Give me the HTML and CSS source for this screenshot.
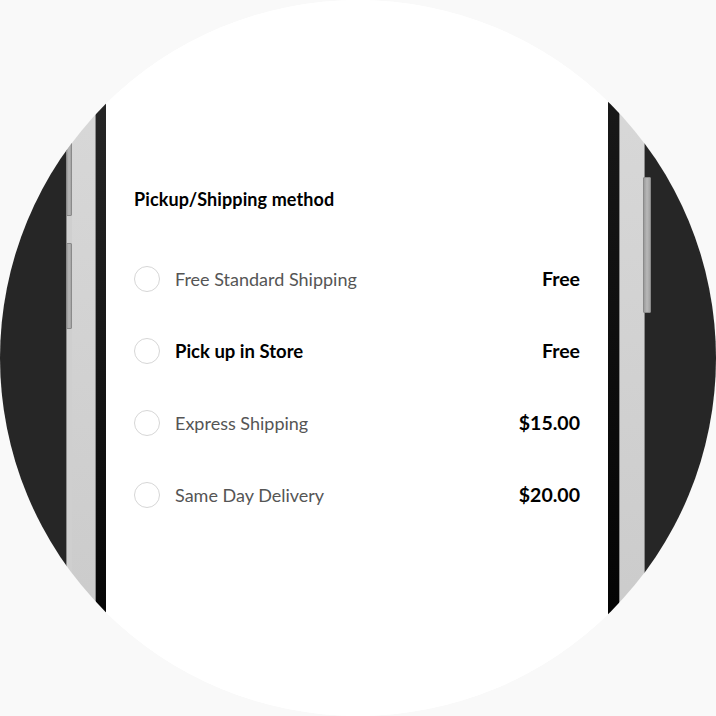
FILE: index.html
```html
<!DOCTYPE html>
<html>
<head>
<meta charset="utf-8">
<link rel="stylesheet" href="styles.css">
</head>
<body>
<div class="lens">
  <div class="body-dark"></div>
  <div class="side side-left">
    <div class="track">
      <div class="btn btn-a"></div>
      <div class="btn btn-b"></div>
    </div>
    <div class="metal"></div>
  </div>
  <div class="bezel bezel-left"></div>
  <div class="screen">
    <h2 class="title">Pickup/Shipping method</h2>
    <div class="options">
      <div class="option">
        <span class="radio"></span>
        <span class="label">Free Standard Shipping</span>
        <span class="price">Free</span>
      </div>
      <div class="option">
        <span class="radio"></span>
        <span class="label strong">Pick up in Store</span>
        <span class="price">Free</span>
      </div>
      <div class="option">
        <span class="radio"></span>
        <span class="label">Express Shipping</span>
        <span class="price">$15.00</span>
      </div>
      <div class="option">
        <span class="radio"></span>
        <span class="label">Same Day Delivery</span>
        <span class="price">$20.00</span>
      </div>
    </div>
  </div>
  <div class="bezel bezel-right"></div>
  <div class="side side-right">
    <div class="metal"></div>
    <div class="btn btn-c"></div>
  </div>
  <div class="body-dark body-dark-right"></div>
</div>
</body>
</html>
```
FILE: styles.css
```css
html, body {
  margin: 0;
  padding: 0;
  background: #f9f9f9;
}
body {
  width: 716px;
  height: 716px;
  font-family: "Lato", "Open Sans", sans-serif;
}
.lens {
  width: 716px;
  height: 716px;
  border-radius: 50%;
  overflow: hidden;
  background: #ffffff;
  display: flex;
}
.body-dark {
  width: 66px;
  flex: none;
  background: #262626;
}
.body-dark-right {
  width: 71px;
}
.side {
  flex: none;
  display: flex;
  position: relative;
}
.side-left {
  width: 30px;
}
.side-left .track {
  width: 6px;
  background: #cfcfcf;
  border-left: 1px solid #8c8c8c;
  box-sizing: border-box;
  display: flex;
  flex-direction: column;
}
.metal {
  flex: 1;
  background: linear-gradient(#dadada, #c9c9c9);
}
.side-left .metal {
  border-right: 1px solid #8a8a8a;
}
.side-right {
  width: 26px;
}
.side-right .metal {
  border-left: 1px solid #8a8a8a;
  border-right: 1px solid #8a8a8a;
}
.btn {
  box-sizing: border-box;
  background: linear-gradient(90deg, #9c9c9c, #b8b8b8 50%, #a2a2a2);
  border: 1px solid #8a8a8a;
  border-radius: 1px;
}
.btn-a {
  margin-top: 142px;
  height: 74px;
  margin-left: -1px;
  width: 6px;
}
.btn-b {
  margin-top: 27px;
  height: 86px;
  margin-left: -1px;
  width: 6px;
}
.btn-c {
  position: absolute;
  top: 177px;
  left: 24px;
  width: 8px;
  height: 136px;
}
.bezel {
  flex: none;
}
.bezel-left {
  width: 10px;
  background: linear-gradient(#2c2c2c, #000000);
}
.bezel-right {
  width: 11px;
  background: linear-gradient(#1c1c1c, #000000);
}
.screen {
  width: 502px;
  flex: none;
  background: #ffffff;
  box-sizing: border-box;
  padding: 187px 28px 0 28px;
}
.title {
  margin: 0;
  font-size: 18px;
  line-height: 24px;
  font-weight: 700;
  color: #000000;
  letter-spacing: 0.1px;
}
.options {
  margin-top: 32px;
  display: flex;
  flex-direction: column;
}
.option {
  height: 72px;
  display: flex;
  align-items: center;
}
.radio {
  width: 26px;
  height: 26px;
  box-sizing: border-box;
  border: 1px solid #d6d6d6;
  border-radius: 50%;
  flex: none;
  margin-right: 15px;
}
.label {
  flex: 1;
  font-size: 18px;
  font-weight: 400;
  color: #555555;
}
.label.strong {
  font-size: 18.5px;
  font-weight: 700;
  color: #000000;
}
.price {
  font-size: 19.5px;
  font-weight: 700;
  color: #000000;
  position: relative;
  top: -1px;
}
```
